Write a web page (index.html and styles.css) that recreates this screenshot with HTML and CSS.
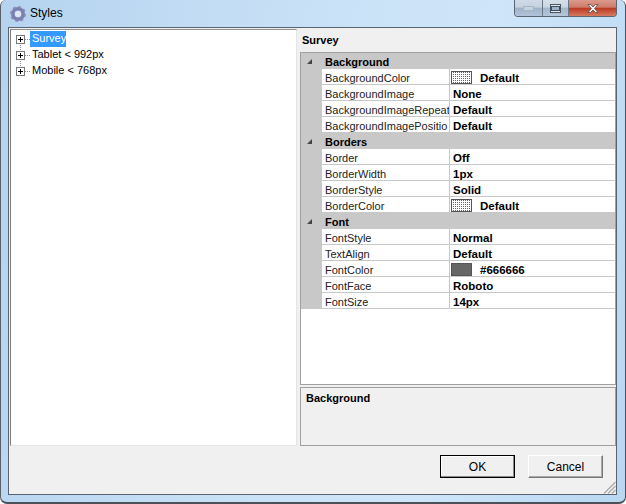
FILE: index.html
```html
<!DOCTYPE html>
<html lang="en">
<head>
<meta charset="utf-8">
<title>Styles</title>
<link rel="stylesheet" href="styles.css">
</head>
<body>
<div class="window">
  <header class="titlebar">
    <svg class="appicon" width="18" height="18" viewBox="0 0 18 18">
      <circle cx="9" cy="9" r="5.2" fill="none" stroke="#7d7fb0" stroke-width="3.6"/>
      <circle cx="9" cy="9" r="7.2" fill="none" stroke="#8a8cb8" stroke-width="1.6" stroke-dasharray="2.8 2.85"/>
      <circle cx="9" cy="9" r="3" fill="#dfe6f2"/>
    </svg>
    <span class="title">Styles</span>
    <div class="caption">
      <div class="capbtn min"><span class="minglyph"></span></div>
      <div class="capbtn max"><span class="maxglyph"></span></div>
      <div class="capbtn close"><svg width="14" height="11" viewBox="0 0 14 11"><path d="M2 1.5h2.6L7 4l2.4-2.5H12L8.6 5.5 12 9.5H9.4L7 7 4.6 9.5H2l3.4-4z" fill="#f4f4f4" stroke="#5a4a4a" stroke-width=".8"/></svg></div>
    </div>
  </header>
  <div class="client">
    <div class="panes">
      <nav class="tree">
        <div class="node first"><span class="plus"></span><span class="dots"></span><span class="label selected">Survey</span></div>
        <div class="node"><span class="plus"></span><span class="dots"></span><span class="label">Tablet &lt; 992px</span></div>
        <div class="node last"><span class="plus"></span><span class="dots"></span><span class="label">Mobile &lt; 768px</span></div>
      </nav>
      <section class="side">
        <div class="objname">Survey</div>
        <div class="grid">
          <div class="cat"><span class="arrow"></span><span class="cattext">Background</span></div>
          <div class="row"><div class="name">BackgroundColor</div><div class="val"><span class="swatch dotted"></span><span class="swtext">Default</span></div></div>
          <div class="row"><div class="name">BackgroundImage</div><div class="val">None</div></div>
          <div class="row"><div class="name">BackgroundImageRepeat</div><div class="val">Default</div></div>
          <div class="row"><div class="name">BackgroundImagePositio</div><div class="val">Default</div></div>
          <div class="cat"><span class="arrow"></span><span class="cattext">Borders</span></div>
          <div class="row"><div class="name">Border</div><div class="val">Off</div></div>
          <div class="row"><div class="name">BorderWidth</div><div class="val">1px</div></div>
          <div class="row"><div class="name">BorderStyle</div><div class="val">Solid</div></div>
          <div class="row"><div class="name">BorderColor</div><div class="val"><span class="swatch dotted"></span><span class="swtext">Default</span></div></div>
          <div class="cat"><span class="arrow"></span><span class="cattext">Font</span></div>
          <div class="row"><div class="name">FontStyle</div><div class="val">Normal</div></div>
          <div class="row"><div class="name">TextAlign</div><div class="val">Default</div></div>
          <div class="row"><div class="name">FontColor</div><div class="val"><span class="swatch grey"></span><span class="swtext">#666666</span></div></div>
          <div class="row"><div class="name">FontFace</div><div class="val">Roboto</div></div>
          <div class="row"><div class="name">FontSize</div><div class="val">14px</div></div>
        </div>
        <div class="help">Background</div>
      </section>
    </div>
    <footer class="actions">
      <button class="btn default" type="button">OK</button>
      <button class="btn" type="button">Cancel</button>
      <svg class="grip" width="13" height="13" viewBox="0 0 13 13"><path d="M12.5 1 1 12.5M12.5 5 5 12.5M12.5 9 9 12.5" stroke="#a9a9a9" stroke-width="1.2" fill="none"/></svg>
    </footer>
  </div>
</div>
</body>
</html>
```
FILE: styles.css
```css
* { box-sizing: border-box; }
html, body { margin: 0; padding: 0; background: #fff; }
body { width: 626px; height: 504px; overflow: hidden; font: 11px/16px "Liberation Sans", Arial, sans-serif; color: #000; }

.window {
  width: 626px; height: 504px; display: flex; flex-direction: column;
  background: linear-gradient(100deg, #b5d3ef 0%, #c9e1f6 45%, #cfe6fa 70%, #b9d7f1 100%);
  border-right: 1px solid #4c5058; border-bottom: 2px solid #4c5058; border-left: 1px solid #5a6068;
  border-radius: 6px 6px 7px 7px;
  padding: 0 8px 7px 7px;
}

.titlebar { height: 27px; flex: none; display: flex; align-items: flex-start; }
.appicon { margin: 5px 3px 0 1px; }
.title { font-size: 12px; line-height: 16px; margin-top: 5px; }
.caption { margin-left: auto; display: flex; height: 17px; border: 1px solid #5c6670; border-top: 0; border-radius: 0 0 4px 4px; overflow: hidden; }
.capbtn { display: flex; align-items: center; justify-content: center; height: 16px; }
.min { width: 28px; background: linear-gradient(#cfdae6 0, #c5d2e0 45%, #9fb2c8 50%, #b0c3d8 100%); border-right: 1px solid #6a7786; }
.max { width: 26px; background: linear-gradient(#d5dfe9 0, #c9d6e2 45%, #a2b5ca 50%, #b3c6da 100%); border-right: 1px solid #6a7786; }
.close { width: 47px; background: linear-gradient(#dc9a8c 0, #cf7a68 45%, #bc3a24 52%, #d67a60 100%); }
.minglyph { width: 11px; height: 5px; margin-top: 1px; background: #c5d2df; border: 1px solid #a8b6c4; }
.maxglyph { width: 11px; height: 9px; background: #e8edf3; border: 1px solid #4a5260; display: flex; align-items: center; justify-content: center; }
.maxglyph::after { content: ""; width: 7px; height: 3px; background: #9fb3c8; border: 1px solid #3f4a58; }

.client { flex: 1; min-height: 0; display: flex; flex-direction: column; background: #f0f0f0; border: 1px solid #5a6470; }

.panes { flex: 1; min-height: 0; display: flex; }
.tree { width: 287px; margin: 1px 0 0 1px; background: #fff; border-top: 1px solid #8f8f8f; border-left: 1px solid #7c7c7c; border-right: 1px solid #e4e4e4; border-bottom: 1px solid #e4e4e4; padding: 1px 0 0 5px; }
.node { display: flex; align-items: center; height: 16px; position: relative; }
.node::before { content: ""; position: absolute; left: 4px; width: 1px; top: 0; bottom: 0; background: repeating-linear-gradient(#888 0 1px, transparent 1px 2px); }
.first::before { top: 8px; }
.last::before { bottom: 8px; }
.plus { position: relative; width: 9px; height: 9px; border: 1px solid #777; background: linear-gradient(#000,#000) center/5px 1px no-repeat, linear-gradient(#000,#000) center/1px 5px no-repeat, #fff; }
.dots { width: 5px; height: 1px; background: repeating-linear-gradient(90deg, #888 0 1px, transparent 1px 2px); }
.label { padding: 0 2px; height: 16px; line-height: 15px; font-size: 11px; }
.selected { padding-right: 0; background: #3399ff; color: #fff; }

.side { flex: 1; min-width: 0; margin-left: 3px; display: flex; flex-direction: column; }
.objname { height: 24px; padding: 4px 0 0 2px; font-weight: bold; }
.grid { height: 333px; background: #fff; border: 1px solid #a0a0a0; }
.cat { height: 16px; background: #c8c8c8; font-weight: bold; display: flex; align-items: center; padding-left: 6px; }
.cattext { position: relative; top: 1px; }
.arrow { width: 0; height: 0; margin-right: 13px; border-bottom: 5px solid #444; border-left: 5px solid transparent; }
.row { height: 16px; display: flex; background: linear-gradient(#c8c8c8,#c8c8c8) left/21px 100% no-repeat; }
.name { width: 128px; margin-left: 21px; flex: none; padding: 1px 0 0 3px; height: 16px; line-height: 17px; color: #222; white-space: nowrap; overflow: hidden; background: #fff; border-bottom: 1px solid #c8c8c8; border-right: 1px solid #c8c8c8; }
.val { flex: 1; height: 16px; line-height: 17px; padding: 1px 0 0 3px; font-size: 11.5px; font-weight: bold; display: flex; align-items: flex-start; border-bottom: 1px solid #c8c8c8; }
.swatch { width: 21px; height: 13px; margin: 1px 8px 0 -2px; border: 1px solid #555; flex: none; }
.dotted { background: conic-gradient(#666 0 25%, #fff 0) 0 0/2px 2px; }
.grey { background: #666; }
.help { height: 59px; margin-top: 2px; padding: 2px 5px; font-weight: bold; background: #f0f0f0; border: 1px solid #a0a0a0; }

.actions { position: relative; height: 48px; flex: none; display: flex; justify-content: flex-end; gap: 13px; padding: 9px 13px 0 0; }
.btn { width: 75px; height: 23px; padding: 0; font: 12px/16px "Liberation Sans", Arial, sans-serif; color: #000; background: #f0f0f0; border: 1px solid; border-color: #fff #777 #777 #fff; box-shadow: inset -1px -1px 0 #a8a8a8; }
.default { border: 1px solid #000; box-shadow: inset -1px -1px 0 #8a8a8a, inset 1px 1px 0 #fff; }
.grip { position: absolute; right: 0; bottom: 0; }
```
